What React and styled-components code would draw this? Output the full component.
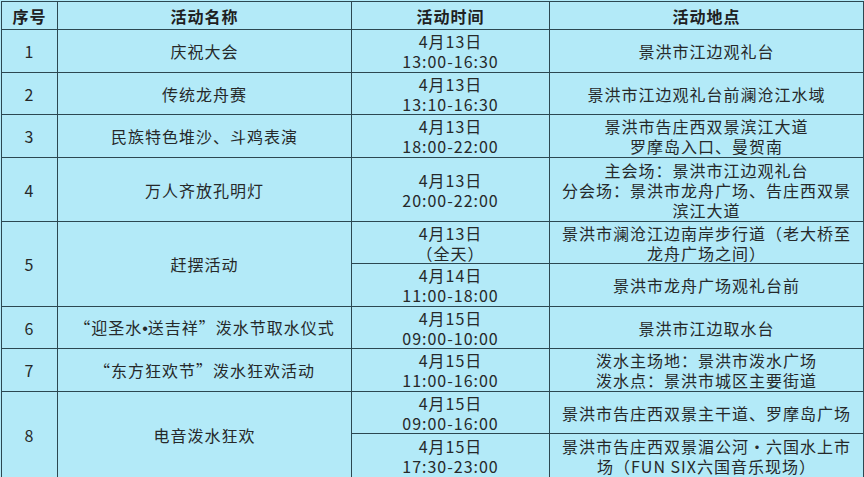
import React from "react";
import styled, { createGlobalStyle } from "styled-components";

const GlobalStyle = createGlobalStyle`
  html, body {
    margin: 0;
    padding: 0;
    overflow: hidden;
    background: #b3eaf8;
  }
`;

const Page = styled.div`
  padding: 1px 0 0 1px;
  width: 864px;
  height: 477px;
  box-sizing: border-box;
  background: #b3eaf8;
`;

const Table = styled.table`
  width: 862px;
  table-layout: fixed;
  border-collapse: collapse;
  font-family: "Noto Sans CJK SC", "Noto Sans", sans-serif;
  font-size: 16px;
  letter-spacing: 1px;
  line-height: 20px;
  color: #26292a;
`;

const Row = styled.tr`
  height: ${(p) => p.$h}px;
`;

const Head = styled.th`
  border: 1px solid #2c4852;
  padding: 0;
  font-weight: 700;
  color: #1e2122;
  text-align: center;
  vertical-align: middle;
`;

const Cell = styled.td`
  border: 1px solid #2c4852;
  padding: 0 4px;
  text-align: center;
  vertical-align: middle;
  white-space: nowrap;
`;

const Dot = styled.span`
  font-family: "Liberation Sans", sans-serif;
  letter-spacing: 0;
`;

const events = [
  {
    no: 1,
    name: "庆祝大会",
    slots: [{ date: "4月13日", time: "13:00-16:30", place: ["景洪市江边观礼台"], h: 43 }],
  },
  {
    no: 2,
    name: "传统龙舟赛",
    slots: [{ date: "4月13日", time: "13:10-16:30", place: ["景洪市江边观礼台前澜沧江水域"], h: 42 }],
  },
  {
    no: 3,
    name: "民族特色堆沙、斗鸡表演",
    slots: [
      {
        date: "4月13日",
        time: "18:00-22:00",
        place: ["景洪市告庄西双景滨江大道", "罗摩岛入口、曼贺南"],
        h: 43,
      },
    ],
  },
  {
    no: 4,
    name: "万人齐放孔明灯",
    slots: [
      {
        date: "4月13日",
        time: "20:00-22:00",
        place: ["主会场：景洪市江边观礼台", "分会场：景洪市龙舟广场、告庄西双景", "滨江大道"],
        h: 64,
      },
    ],
  },
  {
    no: 5,
    name: "赶摆活动",
    slots: [
      {
        date: "4月13日",
        time: "（全天）",
        place: ["景洪市澜沧江边南岸步行道（老大桥至", "龙舟广场之间）"],
        h: 42,
      },
      { date: "4月14日", time: "11:00-18:00", place: ["景洪市龙舟广场观礼台前"], h: 43 },
    ],
  },
  {
    no: 6,
    name: (
      <>
        “迎圣水<Dot>•</Dot>送吉祥”泼水节取水仪式
      </>
    ),
    slots: [{ date: "4月15日", time: "09:00-10:00", place: ["景洪市江边取水台"], h: 42 }],
  },
  {
    no: 7,
    name: "“东方狂欢节”泼水狂欢活动",
    slots: [
      {
        date: "4月15日",
        time: "11:00-16:00",
        place: ["泼水主场地：景洪市泼水广场", "泼水点：景洪市城区主要街道"],
        h: 43,
      },
    ],
  },
  {
    no: 8,
    name: "电音泼水狂欢",
    slots: [
      { date: "4月15日", time: "09:00-16:00", place: ["景洪市告庄西双景主干道、罗摩岛广场"], h: 42 },
      {
        date: "4月15日",
        time: "17:30-23:00",
        place: ["景洪市告庄西双景湄公河·六国水上市", "场（FUN SIX六国音乐现场）"],
        h: 44,
      },
    ],
  },
];

const Lines = ({ items }) =>
  items.map((t, i) => (
    <React.Fragment key={i}>
      {i > 0 && <br />}
      {t}
    </React.Fragment>
  ));

export default function App() {
  return (
    <Page>
      <GlobalStyle />
      <Table>
        <colgroup>
          <col style={{ width: 56 }} />
          <col style={{ width: 294 }} />
          <col style={{ width: 198 }} />
          <col style={{ width: 314 }} />
        </colgroup>
        <thead>
          <Row $h={28}>
            <Head>序号</Head>
            <Head>活动名称</Head>
            <Head>活动时间</Head>
            <Head>活动地点</Head>
          </Row>
        </thead>
        <tbody>
          {events.map((ev) =>
            ev.slots.map((s, i) => (
              <Row key={`${ev.no}-${i}`} $h={s.h}>
                {i === 0 && <Cell rowSpan={ev.slots.length}>{ev.no}</Cell>}
                {i === 0 && <Cell rowSpan={ev.slots.length}>{ev.name}</Cell>}
                <Cell>
                  <Lines items={[s.date, s.time]} />
                </Cell>
                <Cell>
                  <Lines items={s.place} />
                </Cell>
              </Row>
            ))
          )}
        </tbody>
      </Table>
    </Page>
  );
}
